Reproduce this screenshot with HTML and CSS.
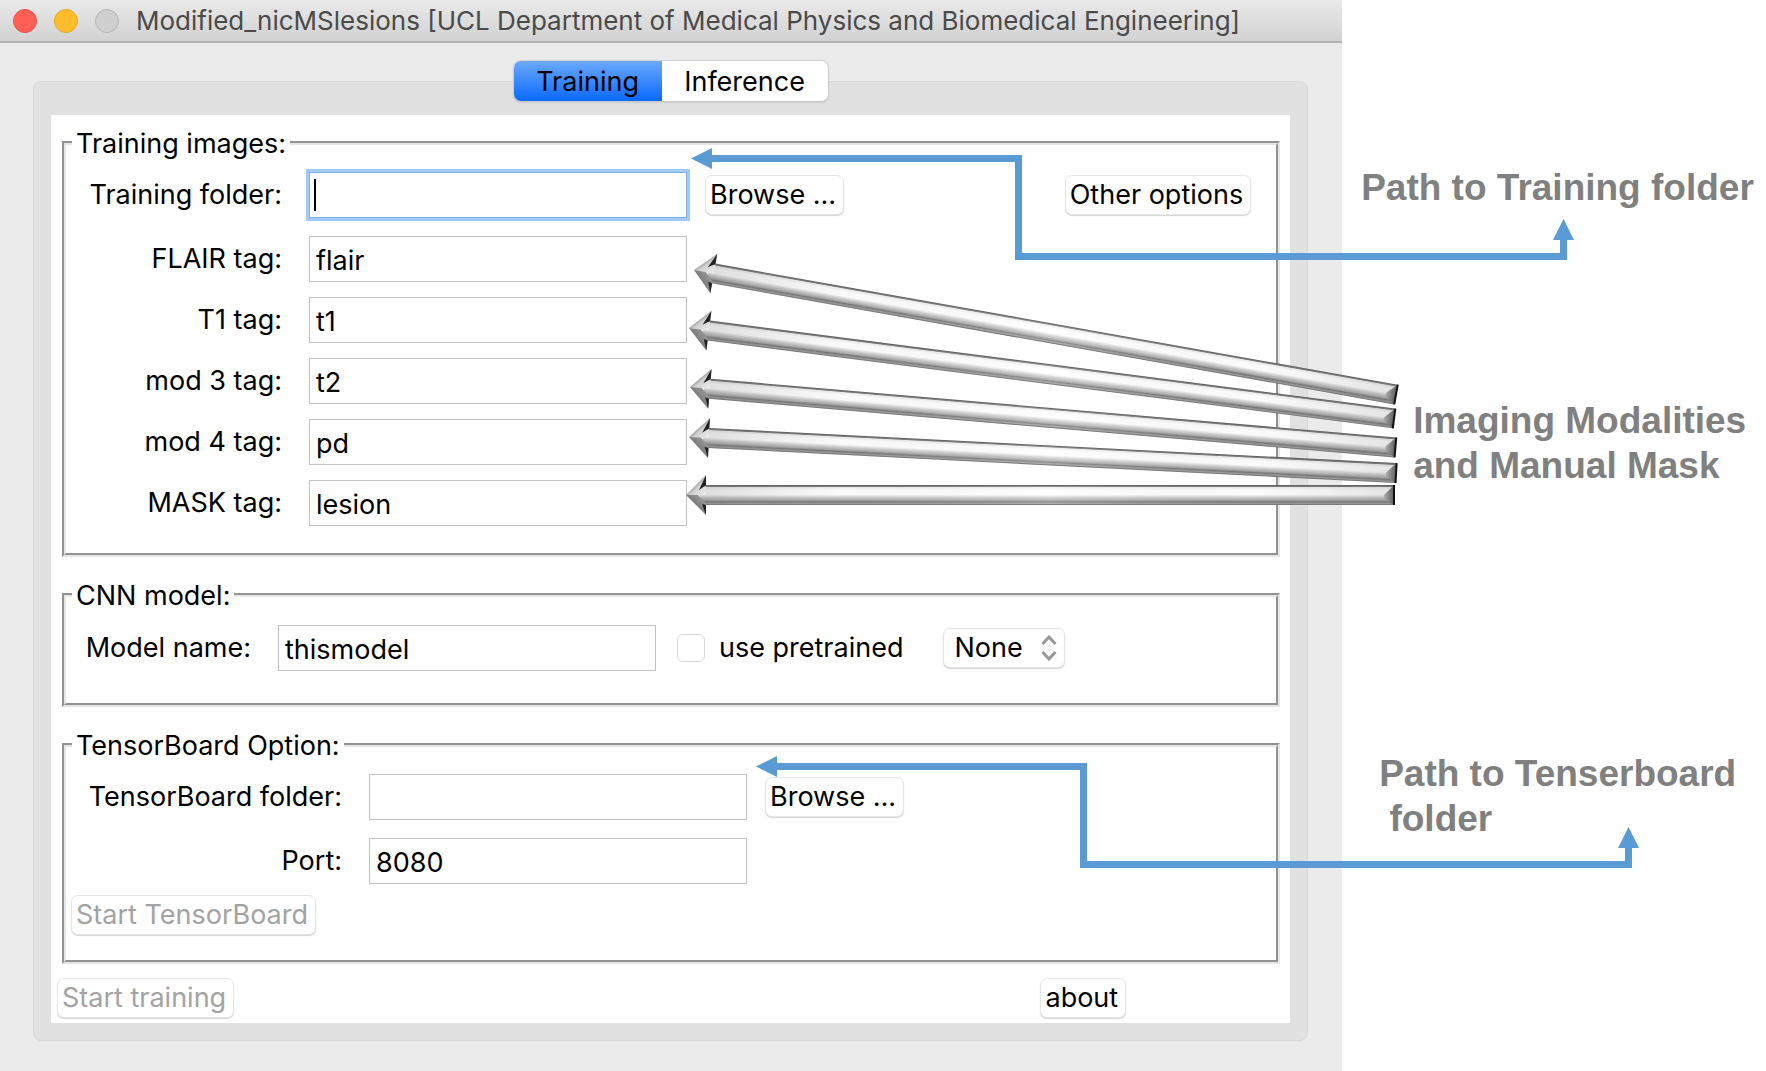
FILE: index.html
```html
<!DOCTYPE html>
<html lang="en">
<head>
<meta charset="utf-8">
<meta name="viewport" content="width=device-width, initial-scale=1">
<title>Modified_nicMSlesions</title>
<link rel="stylesheet" href="styles.css">
</head>
<body>
<div class="figure">
  <main class="window">
    <header class="titlebar">
      <span class="light light-close"></span>
      <span class="light light-minimise"></span>
      <span class="light light-zoom"></span>
      <h1 class="title">Modified_nicMSlesions [UCL Department of Medical Physics and Biomedical Engineering]</h1>
    </header>

    <div class="window-body">
      <nav class="tabs">
        <button class="tab tab-active" type="button">Training</button>
        <button class="tab" type="button">Inference</button>
      </nav>
      <div class="panel">
        <form class="sheet">
          <fieldset class="group">
            <legend>Training images:</legend>
            <div class="rows rows-images">
              <div class="row row-first">
                <label for="train-folder">Training folder:</label>
                <input class="field field-focused" id="train-folder" type="text">
                <button class="btn" type="button">Browse ...</button>
                <button class="btn btn-options" type="button">Other options</button>
              </div>
              <div class="row">
                <label for="flair">FLAIR tag:</label>
                <input class="field" id="flair" type="text" value="flair">
              </div>
              <div class="row">
                <label for="t1">T1 tag:</label>
                <input class="field" id="t1" type="text" value="t1">
              </div>
              <div class="row">
                <label for="mod3">mod 3 tag:</label>
                <input class="field" id="mod3" type="text" value="t2">
              </div>
              <div class="row">
                <label for="mod4">mod 4 tag:</label>
                <input class="field" id="mod4" type="text" value="pd">
              </div>
              <div class="row">
                <label for="mask">MASK tag:</label>
                <input class="field" id="mask" type="text" value="lesion">
              </div>
            </div>
          </fieldset>

          <fieldset class="group">
            <legend>CNN model:</legend>
            <div class="rows rows-model">
              <div class="row">
                <label for="model">Model name:</label>
                <input class="field" id="model" type="text" value="thismodel">
                <input class="check" id="pretrained" type="checkbox">
                <label class="check-label" for="pretrained">use pretrained</label>
                <span class="picker">
                  <select id="weights" aria-label="Pretrained model">
                    <option>None</option>
                  </select>
                  <svg class="picker-arrows" viewBox="0 0 16 26" aria-hidden="true"><path d="M1.500 9 8 2l6.500 7M1.500 17 8 24l6.500-7"/></svg>
                </span>
              </div>
            </div>
          </fieldset>

          <fieldset class="group">
            <legend>TensorBoard Option:</legend>
            <div class="rows rows-board">
              <div class="row row-first">
                <label for="board-folder">TensorBoard folder:</label>
                <input class="field" id="board-folder" type="text">
                <button class="btn" type="button">Browse ...</button>
              </div>
              <div class="row">
                <label for="port">Port:</label>
                <input class="field" id="port" type="text" value="8080">
              </div>
            </div>
            <button class="btn btn-board" type="button" disabled>Start TensorBoard</button>
          </fieldset>

          <footer class="actions">
            <button class="btn" type="button" disabled>Start training</button>
            <button class="btn" type="button">about</button>
          </footer>
        </form>
      </div>
    </div>
  </main>

  <aside class="notes">
    <p class="note note-training">Path to Training folder</p>
    <p class="note note-modalities">Imaging Modalities<br>and Manual Mask</p>
    <p class="note note-board">Path to Tenserboard<br>&nbsp;folder</p>
  </aside>

  <svg class="arrows" viewBox="0 0 1766 1071" preserveAspectRatio="xMinYMin meet" aria-hidden="true">
    <defs>
      <linearGradient id="tube" x1="0" y1="0" x2="0" y2="1">
        <stop offset="0" stop-color="#5c5c5c"/>
        <stop offset=".08" stop-color="#7a7a7a"/>
        <stop offset=".12" stop-color="#ececec"/>
        <stop offset=".25" stop-color="#fff"/>
        <stop offset=".48" stop-color="#fff"/>
        <stop offset=".6" stop-color="#d4d4d4"/>
        <stop offset=".76" stop-color="#a8a8a8"/>
        <stop offset=".84" stop-color="#747474"/>
        <stop offset=".92" stop-color="#9a9a9a"/>
        <stop offset="1" stop-color="#6c6c6c"/>
      </linearGradient>
      <linearGradient id="shade" x1="0" y1="0" x2="1" y2="0">
        <stop offset="0" stop-color="#777" stop-opacity=".25"/>
        <stop offset=".2" stop-color="#999" stop-opacity=".05"/>
        <stop offset=".5" stop-color="#fff" stop-opacity=".2"/>
        <stop offset=".8" stop-color="#999" stop-opacity=".04"/>
        <stop offset="1" stop-color="#777" stop-opacity=".2"/>
      </linearGradient>
      <linearGradient id="barb" x1="0" y1="0" x2="1" y2="1">
        <stop offset="0" stop-color="#555"/>
        <stop offset=".4" stop-color="#777"/>
        <stop offset=".6" stop-color="#d0d0d0"/>
        <stop offset="1" stop-color="#eee"/>
      </linearGradient>
      <linearGradient id="under" x1="0" y1="1" x2="1" y2="0">
        <stop offset="0" stop-color="#555"/>
        <stop offset=".5" stop-color="#7c7c7c"/>
        <stop offset="1" stop-color="#a8a8a8"/>
      </linearGradient>
      <linearGradient id="cap" x1="0" y1="0" x2="1" y2="0">
        <stop offset="0" stop-color="#acacac"/>
        <stop offset="1" stop-color="#5c5c5c"/>
      </linearGradient>
      <g id="steel">
        <path d="M14-10H708V10H14z" fill="url(#tube)"/>
        <path d="M14-9H708V9H14z" fill="url(#shade)"/>
        <path d="M0 0 20-20 15-7 20-9V0z" fill="url(#barb)"/>
        <path d="M0 0H12L20 8V20z" fill="url(#under)"/>
        <path d="M20-20V-10L13-5z" fill="#222"/>
        <path d="M20 20V10L16 9z" fill="#222"/>
        <path d="M708-10V10L698 4V0z" fill="url(#cap)"/>
        <path d="M708-10V10" stroke="#111" stroke-width="2"/>
      </g>
    </defs>
    <use href="#steel" transform="translate(694 270) rotate(10.060) scale(1.007 1)"/>
    <use href="#steel" transform="translate(689 328) rotate(7.310) scale(1.004 1)"/>
    <use href="#steel" transform="translate(690 387) rotate(4.900)"/>
    <use href="#steel" transform="translate(689 437) rotate(2.920)"/>
    <use href="#steel" transform="translate(686 495)"/>
    <g class="connector">
      <path d="M711 158.500H1018.500V256.500H1563.500V239"/>
      <path d="M775 766.500H1083.500V864.500H1628.500V847"/>
    </g>
    <g class="connector-head">
      <path d="M691 158.500 712 148V169z"/>
      <path d="M1563.500 219 1574 240H1553z"/>
      <path d="M756 766.500 777 756V777z"/>
      <path d="M1628.500 827 1639 848H1618z"/>
    </g>
  </svg>
</div>
</body>
</html>
```
FILE: styles.css
```css
* {
  box-sizing: border-box;
}

body {
  margin: 0;
  background: #fff;
  color: #000;
  font: 27px/34px Inter, "Liberation Sans", sans-serif;
}

button,
input,
select {
  font: inherit;
  color: inherit;
}

.figure {
  position: relative;
  display: grid;
  grid-template-columns: 76fr 24fr;
  min-height: 100vh;
}

.window {
  background: #ebebeb;
}

/* Title bar */
.titlebar {
  display: flex;
  align-items: center;
  gap: 17px;
  height: 43px;
  padding: 0 13px;
  background: linear-gradient(#e9e9e9, #d2d2d2);
  border-bottom: 2px solid #b4b4b4;
}

.light {
  flex: none;
  width: 24px;
  height: 24px;
  border: 1px solid;
  border-radius: 50%;
}

.light-close {
  background: #ff5f57;
  border-color: #e9514a;
}

.light-minimise {
  background: #ffbd2e;
  border-color: #e5a823;
}

.light-zoom {
  background: #cfcfcf;
  border-color: #b6b6b6;
}

.title {
  margin: 0;
  color: #4a4a4a;
  font-size: 26px;
  font-weight: 400;
  white-space: nowrap;
}

/* Tabs and panel */
.window-body {
  padding: 18px 34px 30px 33px;
}

.tabs {
  position: relative;
  display: flex;
  width: 314px;
  height: 40px;
  margin: 0 auto -20px;
  background: #fff;
  border-radius: 7px;
  box-shadow: 0 0 1px 1px #cfcfcf, 0 1px 2px #999;
}

.tab {
  flex: 1 1 166px;
  padding: 1px 0 0;
  background: none;
  border: 0;
}

.tab-active {
  flex-basis: 148px;
  background: linear-gradient(#6ba9fb, #0a69ff);
  border-radius: 7px 0 0 7px;
}

.panel {
  padding: 33px 17px 17px;
  background: #e1e1e1;
  border: 1px solid #d9d9d9;
  border-radius: 8px;
}

.sheet {
  padding: 11px 10px 5px 11px;
  background: #fff;
}

/* Groups */
.group {
  min-width: 0;
  margin: 0 0 21px;
  padding: 0;
  border: 4px groove #e6e6e6;
}

.group:last-of-type {
  margin-bottom: 14px;
}

legend {
  height: 34px;
  margin-left: 6px;
  padding: 1px 4px 0;
}

.rows {
  display: grid;
  gap: 15px;
}

.rows-images {
  --label: 216px;
  padding: 12px 25px 27px 0;
}

.rows-model {
  --label: 185px;
  padding: 13px 25px 32px 0;
}

.rows-board {
  --label: 276px;
  padding: 12px 25px 11px 0;
}

.row {
  display: flex;
  align-items: center;
  height: 46px;
}

.row-first {
  margin-bottom: 3px;
}

.row > label:first-child {
  flex: none;
  width: var(--label);
  margin-right: 27px;
  text-align: right;
  white-space: nowrap;
}

.field {
  flex: none;
  width: 378px;
  height: 46px;
  padding: 2px 6px 0;
  background: #fff;
  border: 1px solid #c3c3c3;
  border-radius: 0;
  outline: 0;
}

.field-focused {
  background: linear-gradient(#000, #000) 4px center / 2px 32px no-repeat #fff;
  border-color: #7fb0e6;
  box-shadow: 0 0 0 3px #a0caf8;
}

.btn {
  height: 40px;
  padding: 0 7px 0 4px;
  background: #fff;
  border: 1px solid #e6e6e6;
  border-radius: 7px;
  box-shadow: 0 1px 1px #d5d5d5;
  white-space: nowrap;
}

.btn:disabled {
  color: #a3a3a3;
}

.field + .btn {
  margin-left: 18px;
}

.btn-options {
  margin-left: auto;
}

.check {
  flex: none;
  width: 28px;
  height: 28px;
  margin: 0 0 0 21px;
  appearance: none;
  background: #fff;
  border: 1px solid #d8d8d8;
  border-radius: 6px;
}

.check-label {
  margin: 0 40px 0 14px;
}

.picker {
  position: relative;
  width: 122px;
  height: 40px;
}

.picker select {
  width: 100%;
  height: 100%;
  padding: 0 10px;
  appearance: none;
  background: #fff;
  border: 1px solid #e2e2e2;
  border-radius: 7px;
  box-shadow: 0 1px 1px #d5d5d5;
}

.picker-arrows {
  position: absolute;
  top: 7px;
  right: 8px;
  width: 16px;
  height: 26px;
  fill: none;
  stroke: #999;
  stroke-width: 3px;
  pointer-events: none;
}

.btn-board {
  display: block;
  margin: 0 0 25px 5px;
}

.actions {
  display: flex;
  justify-content: space-between;
  margin: 0 154px 0 -5px;
}

/* Annotations */
.notes {
  padding-top: 165px;
  color: #808080;
  font: bold 37px/45px "Liberation Sans", Arial, sans-serif;
  white-space: nowrap;
}

.note {
  margin: 0;
}

.note-training {
  padding-left: 19px;
}

.note-modalities {
  padding: 188px 0 263px 71px;
}

.note-board {
  padding-left: 37px;
}

.arrows {
  position: absolute;
  top: 0;
  left: 0;
  width: 100%;
  pointer-events: none;
}

.connector {
  fill: none;
  stroke: #5b9bd5;
  stroke-width: 7px;
}

.connector-head {
  fill: #5b9bd5;
}
```
